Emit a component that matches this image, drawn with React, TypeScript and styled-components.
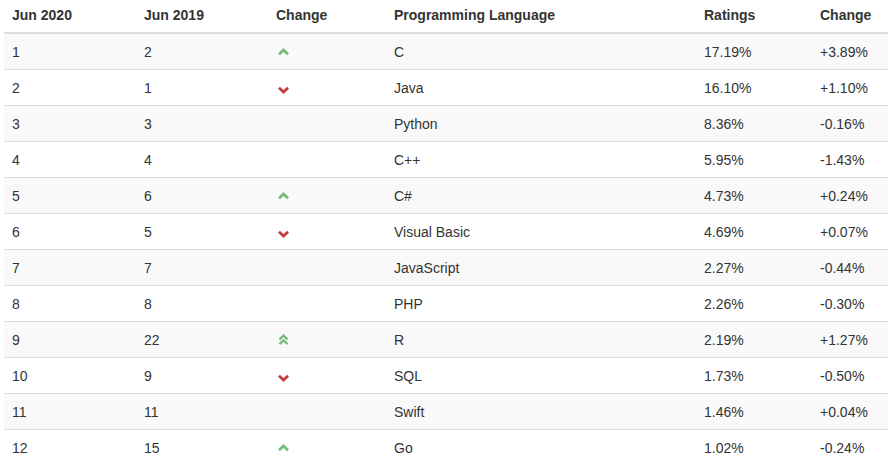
import React from "react";
import styled, { createGlobalStyle } from "styled-components";

const Global = createGlobalStyle`
  html, body { margin: 0; padding: 0; background: #fff; }
  body { font-family: "Liberation Sans", Arial, Helvetica, sans-serif; font-size: 14px; color: #333; }
`;

const Wrap = styled.div`
  padding: 0 4px;
`;

const Table = styled.table`
  width: 884px;
  border-collapse: collapse;
  border-spacing: 0;
  table-layout: fixed;
`;

const Col = styled.col<{ $w?: number }>`
  width: ${(p) => (p.$w ? `${p.$w}px` : "auto")};
`;

const Th = styled.th`
  text-align: left;
  font-weight: bold;
  line-height: 20px;
  padding: 5px 8px 7px;
  border-bottom: 2px solid #ddd;
  white-space: nowrap;
`;

const Tr = styled.tr<{ $striped: boolean }>`
  background: ${(p) => (p.$striped ? "#f9f9f9" : "#fff")};
`;

const Td = styled.td`
  height: 20px;
  line-height: 20px;
  padding: 8px 8px 7px;
  border-top: 1px solid #ddd;
  vertical-align: top;
  white-space: nowrap;
`;

const IconBox = styled.div`
  display: flex;
  align-items: center;
  height: 20px;
  padding-left: 1px;
`;

type Trend = "up" | "down" | "up2" | null;

const Chevron: React.FC<{ trend: Trend }> = ({ trend }) => {
  if (!trend) return null;
  if (trend === "up")
    return (
      <svg width="13" height="8" viewBox="0 0 13 8">
        <polyline points="2,6.3 6.5,2 11,6.3" fill="none" stroke="#74bd78" strokeWidth="2.8" />
      </svg>
    );
  if (trend === "down")
    return (
      <svg width="13" height="8" viewBox="0 0 13 8" style={{ marginTop: 3 }}>
        <polyline points="2,1.7 6.5,6 11,1.7" fill="none" stroke="#c33b3b" strokeWidth="2.8" />
      </svg>
    );
  return (
    <svg width="13" height="12" viewBox="0 0 13 12">
      <polyline points="2.4,5.4 6.5,1.6 10.6,5.4" fill="none" stroke="#74bd78" strokeWidth="2.3" />
      <polyline points="2.4,10.2 6.5,6.4 10.6,10.2" fill="none" stroke="#74bd78" strokeWidth="2.3" />
    </svg>
  );
};

const rows: [number, number, Trend, string, string, string][] = [
  [1, 2, "up", "C", "17.19%", "+3.89%"],
  [2, 1, "down", "Java", "16.10%", "+1.10%"],
  [3, 3, null, "Python", "8.36%", "-0.16%"],
  [4, 4, null, "C++", "5.95%", "-1.43%"],
  [5, 6, "up", "C#", "4.73%", "+0.24%"],
  [6, 5, "down", "Visual Basic", "4.69%", "+0.07%"],
  [7, 7, null, "JavaScript", "2.27%", "-0.44%"],
  [8, 8, null, "PHP", "2.26%", "-0.30%"],
  [9, 22, "up2", "R", "2.19%", "+1.27%"],
  [10, 9, "down", "SQL", "1.73%", "-0.50%"],
  [11, 11, null, "Swift", "1.46%", "+0.04%"],
  [12, 15, "up", "Go", "1.02%", "-0.24%"],
];

export default function App() {
  return (
    <>
      <Global />
      <Wrap>
        <Table>
          <colgroup>
            <Col $w={132} />
            <Col $w={132} />
            <Col $w={118} />
            <Col $w={310} />
            <Col $w={116} />
            <Col />
          </colgroup>
          <thead>
            <tr>
              <Th>Jun 2020</Th>
              <Th>Jun 2019</Th>
              <Th>Change</Th>
              <Th>Programming Language</Th>
              <Th>Ratings</Th>
              <Th>Change</Th>
            </tr>
          </thead>
          <tbody>
            {rows.map((r, i) => (
              <Tr key={r[0]} $striped={i % 2 === 0}>
                <Td>{r[0]}</Td>
                <Td>{r[1]}</Td>
                <Td>
                  <IconBox>
                    <Chevron trend={r[2]} />
                  </IconBox>
                </Td>
                <Td>{r[3]}</Td>
                <Td>{r[4]}</Td>
                <Td>{r[5]}</Td>
              </Tr>
            ))}
          </tbody>
        </Table>
      </Wrap>
    </>
  );
}
